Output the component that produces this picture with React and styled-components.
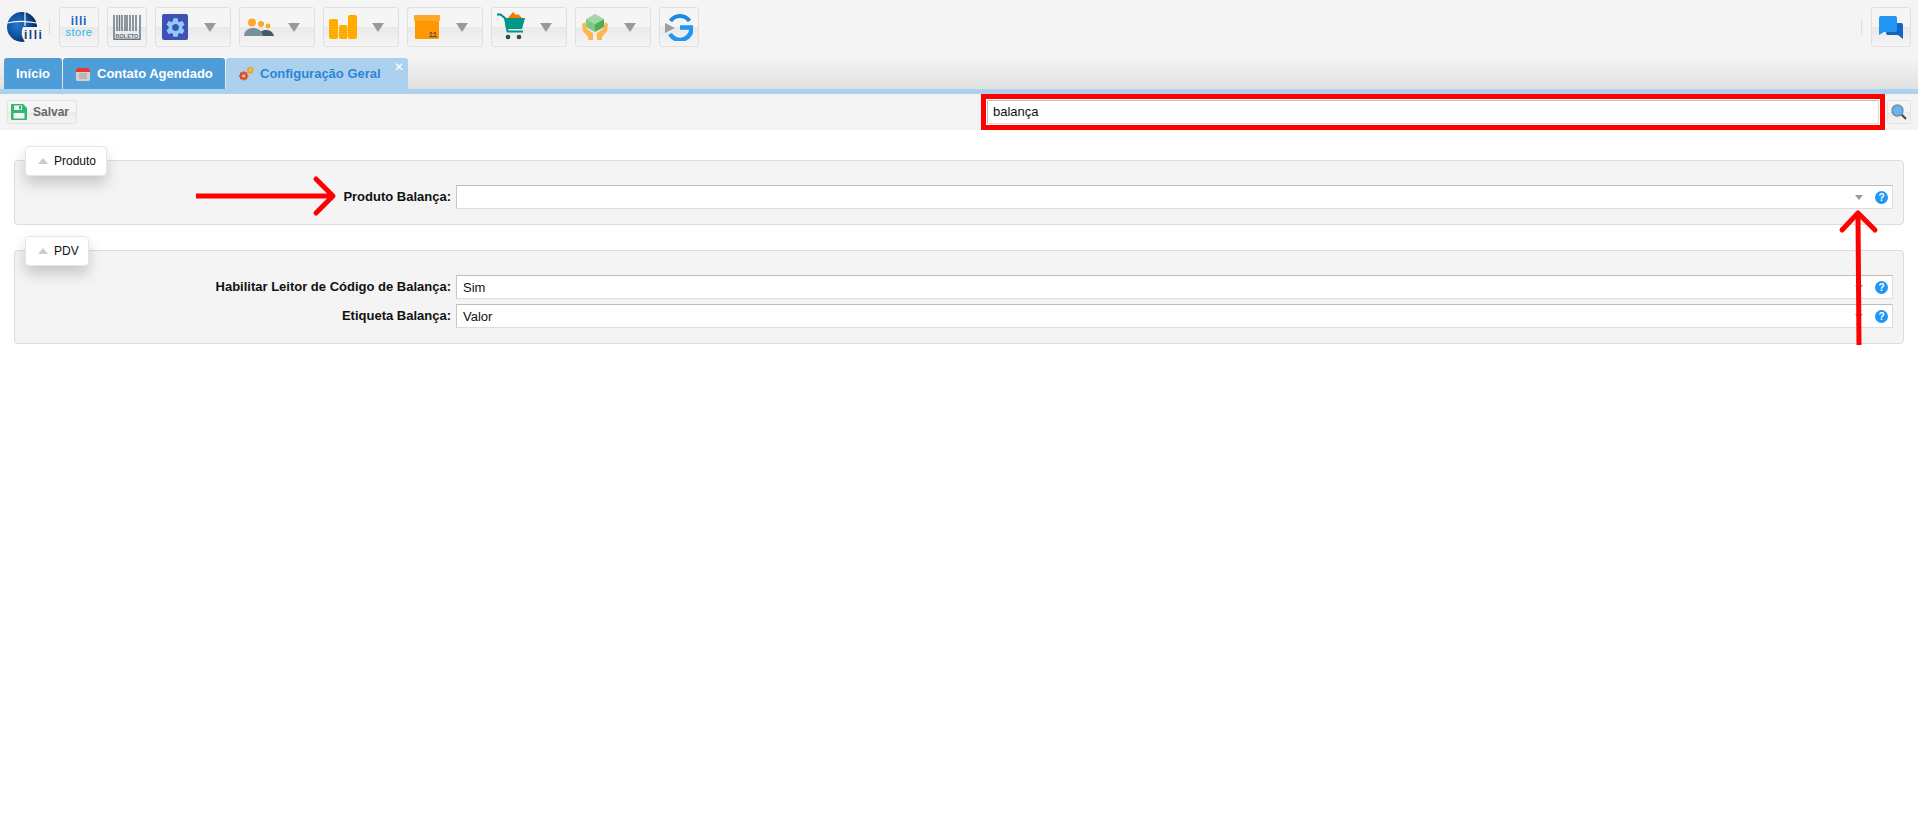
import React from 'react';
import styled, { createGlobalStyle, css } from 'styled-components';
import { MdSettings } from 'react-icons/md';

const GlobalStyle = createGlobalStyle`
  html, body {
    margin: 0;
    padding: 0;
    background: #fff;
    font-family: "Liberation Sans", Arial, sans-serif;
  }
  * { box-sizing: border-box; }
`;

const Page = styled.div`
  position: relative;
  width: 1918px;
  height: 825px;
  overflow: hidden;
  background: #fff;
`;

const Header = styled.div`
  height: 58px;
  background: #f4f4f4;
  display: flex;
  align-items: flex-start;
  padding: 7px 7px 0 7px;
`;

const Logo = styled.svg`
  width: 34px;
  height: 32px;
  margin-top: 5px;
  flex: none;
  overflow: visible;
`;

const Divider = styled.div`
  width: 1px;
  height: 14px;
  background: #dedede;
  margin-top: 13px;
  margin-left: ${p => (p.$auto ? 'auto' : `${p.$left}px`)};
  margin-right: ${p => p.$right}px;
  flex: none;
`;

const MenuButton = styled.div`
  width: ${p => (p.$wide ? 76 : 40)}px;
  height: 40px;
  margin-right: ${p => (p.$end ? 0 : 8)}px;
  flex: none;
  border: 1px solid #e0e0e0;
  border-radius: 3px;
  background: linear-gradient(#f5f5f5 0, #f5f5f5 49%, #e9e9e9 50%, #f5f5f5 100%);
  display: flex;
  align-items: center;
  justify-content: ${p => (p.$wide ? 'space-between' : 'center')};
  padding: ${p => (p.$wide ? `0 14px 0 ${p.$pad}px` : '0')};
`;

const Caret = styled.span`
  width: 0;
  height: 0;
  flex: none;
  border-left: 6.5px solid transparent;
  border-right: 6.5px solid transparent;
  border-top: 9px solid #999;
`;

const TabStrip = styled.div`
  height: 31px;
  background: linear-gradient(#f4f4f4, #e0e0e0);
  display: flex;
  align-items: flex-end;
  padding-left: 4px;
  gap: 1px;
`;

const Tab = styled.div`
  position: relative;
  height: 31px;
  display: flex;
  align-items: center;
  width: ${p => p.$width}px;
  padding-left: ${p => p.$pad}px;
  gap: ${p => p.$gap || 0}px;
  border-radius: 3px 3px 0 0;
  background: ${p => (p.$active ? '#acd1ee' : '#4e9cd8')};
  color: ${p => (p.$active ? '#2a86d6' : '#fff')};
  font-size: 13px;
  font-weight: 700;
`;

const TabClose = styled.span`
  position: absolute;
  top: 3px;
  right: 4px;
  color: #fff;
  font-size: 12px;
  line-height: 13px;
  font-weight: 400;
`;

const BlueLine = styled.div`
  height: 5px;
  background: #acd1ee;
`;

const Toolbar = styled.div`
  height: 36px;
  background: #f4f4f4;
  display: flex;
  align-items: center;
  padding: 0 7px;
`;

const smallButton = css`
  height: 24px;
  border: 1px solid #e2e2e2;
  border-radius: 3px;
  background: linear-gradient(#f5f5f5, #f5f5f5 50%, #ebebeb 51%, #f4f4f4);
  display: flex;
  align-items: center;
`;

const SaveButton = styled.div`
  ${smallButton}
  width: 70px;
  padding-left: 3px;
  gap: 6px;
  color: #666;
  font-size: 12px;
  font-weight: 700;
`;

const SearchBox = styled.div`
  margin-left: auto;
  width: 904px;
  height: 36px;
  border: 5px solid #f00;
  background: #fff;
  padding: 1px;
  display: flex;
`;

const SearchInput = styled.div`
  flex: 1;
  border: 1px solid #bdbdbd;
  border-bottom-color: #ddd;
  border-right-color: #ddd;
  padding-left: 5px;
  font-size: 13px;
  line-height: 22px;
  color: #111;
`;

const SearchButton = styled.div`
  ${smallButton}
  width: 24px;
  margin-left: 2px;
  justify-content: center;
`;

const Content = styled.div`
  padding: 30px 14px 0 14px;
`;

const Fieldset = styled.div`
  position: relative;
  height: ${p => p.$height}px;
  margin-bottom: 25px;
  border: 1px solid #dcdcdc;
  border-radius: 4px;
  background: #f4f4f4;
  padding-top: 24px;
  padding-right: 10px;
`;

const Legend = styled.div`
  position: absolute;
  left: 10px;
  top: -15px;
  width: ${p => p.$width}px;
  height: 30px;
  display: flex;
  align-items: center;
  gap: 6px;
  padding-left: 12px;
  background: #fff;
  border: 1px solid #e6e6e6;
  border-radius: 4px;
  box-shadow: 0 8px 14px rgba(0, 0, 0, 0.18);
  font-size: 12px;
  color: #111;
`;

const LegendCaret = styled.span`
  width: 0;
  height: 0;
  border-left: 5px solid transparent;
  border-right: 5px solid transparent;
  border-bottom: 6px solid #ccc;
`;

const Row = styled.div`
  display: flex;
  align-items: center;
  height: 24px;
  margin-bottom: 5px;
`;

const Label = styled.div`
  width: 441px;
  padding: 0 5px 2px 0;
  text-align: right;
  font-size: 13px;
  font-weight: 700;
  color: #111;
  flex: none;
`;

const Select = styled.div`
  position: relative;
  flex: 1;
  height: 24px;
  background: #fff;
  border: 1px solid #ddd;
  border-top-color: #bdbdbd;
  border-left-color: #c8c8c8;
  padding-left: 6px;
  font-size: 13px;
  line-height: 24px;
  color: #111;
`;

const SelectCaret = styled.span`
  position: absolute;
  right: 29px;
  top: 9px;
  width: 0;
  height: 0;
  border-left: 4px solid transparent;
  border-right: 4px solid transparent;
  border-top: 5px solid #999;
`;

const Help = styled.span`
  position: absolute;
  right: 4px;
  top: 5px;
  width: 13px;
  height: 13px;
  border-radius: 50%;
  background: #2196f3;
  color: #fff;
  font-size: 10px;
  line-height: 13px;
  font-weight: 700;
  text-align: center;
`;

const GearTile = styled.span`
  width: 26px;
  height: 26px;
  flex: none;
  border-radius: 2px;
  background: #3f51b5;
  color: #90caf9;
  display: flex;
  align-items: center;
  justify-content: center;
  font-size: 23px;
`;

const Annotation = styled.svg`
  position: absolute;
  left: 0;
  top: 0;
  pointer-events: none;
`;

const LogoIcon = () => (
  <Logo viewBox="0 0 34 32">
    <defs>
      <radialGradient id="globe" cx="35%" cy="45%" r="65%">
        <stop offset="0" stopColor="#2477cc" />
        <stop offset="0.6" stopColor="#0f4f9e" />
        <stop offset="1" stopColor="#08234a" />
      </radialGradient>
    </defs>
    <circle cx="15" cy="15" r="15" fill="url(#globe)" />
    <path d="M0 11c8-2 20-2 30 0M18 0v14" stroke="#f4f4f4" strokeWidth="1.200" fill="none" />
    <path d="M18 30a15 15 0 0 1-2-15h18v17H18z" fill="#f4f4f4" />
    <text x="17" y="27" fontSize="12" fontWeight="700" fontFamily="Liberation Sans" fill="#123f7e" letterSpacing="1.500">illi</text>
  </Logo>
);

const StoreIcon = () => (
  <svg width="28" height="26" viewBox="0 0 28 26">
    <text x="14" y="11" textAnchor="middle" fontSize="12" fontWeight="700" fontFamily="Liberation Sans" fill="#1565c0" letterSpacing="0.800">illi</text>
    <text x="14" y="22" textAnchor="middle" fontSize="11" fontFamily="Liberation Sans" fill="#2ab8e6" letterSpacing="0.500">store</text>
  </svg>
);

const BoletoIcon = () => (
  <svg width="28" height="25" viewBox="0 0 28 25">
    <path d="M1 0v25M4 0v16M6.500 0v16M9 0v16M12 0v16M14 0v16M17 0v16M20 0v16M23 0v16M27 0v25" stroke="#6a7a85" strokeWidth="1.500" />
    <rect x="1" y="23.500" width="26" height="1.500" fill="#6a7a85" />
    <text x="14" y="22.500" textAnchor="middle" fontSize="5.500" fontWeight="700" fontFamily="Liberation Sans" fill="#5c6a74">BOLETO</text>
  </svg>
);

const GearIcon = () => (
  <GearTile><MdSettings /></GearTile>
);

const PeopleIcon = () => (
  <svg width="30" height="18" viewBox="0 0 30 18">
    <circle cx="8" cy="4.500" r="4" fill="#ffa726" />
    <circle cx="17" cy="6" r="3" fill="#ffa726" />
    <circle cx="24" cy="8" r="2.400" fill="#ffa726" />
    <path d="M14 18c1-4 4-6 8-6s7 2 8 6z" fill="#455a64" />
    <path d="M0 18c0-5 4-8 9-8s9 3 10 8z" fill="#78909c" />
  </svg>
);

const CoinsIcon = () => (
  <svg width="28" height="24" viewBox="0 0 28 24">
    <defs>
      <pattern id="coin" width="28" height="2.500" patternUnits="userSpaceOnUse">
        <rect width="28" height="2.500" fill="#ffb300" />
        <rect width="28" height="0.800" fill="#ffa000" />
      </pattern>
    </defs>
    <rect x="0" y="4" width="9" height="20" rx="2" fill="url(#coin)" />
    <rect x="10" y="10" width="8.500" height="14" rx="2" fill="url(#coin)" />
    <rect x="19" y="0" width="9" height="24" rx="2" fill="url(#coin)" />
  </svg>
);

const BoxIcon = () => (
  <svg width="26" height="24" viewBox="0 0 26 24">
    <rect x="1" y="4" width="24" height="20" rx="1" fill="#ff9800" />
    <rect x="0" y="0" width="26" height="6" rx="1" fill="#ffa726" />
    <path d="M17 21v-4M21 21v-4M15.500 18.500l1.500-1.500 1.500 1.500M19.500 18.500l1.500-1.500 1.500 1.500" stroke="#6d4c41" strokeWidth="1" fill="none" />
    <rect x="15" y="21" width="8" height="1.200" fill="#6d4c41" />
  </svg>
);

const CartIcon = () => (
  <svg width="28" height="30" viewBox="0 0 28 30">
    <path d="M11 6l5-6 3 3 2-1 4 4z" fill="#f57c00" />
    <path d="M0 2.500h3.500l5 4 2 13" stroke="#00897b" strokeWidth="2" fill="none" />
    <path d="M7 6h21l-3 11H9z" fill="#009688" />
    <path d="M10 19.500h16" stroke="#009688" strokeWidth="2" />
    <circle cx="11" cy="25" r="2.300" fill="#37474f" />
    <circle cx="22" cy="25" r="2.300" fill="#37474f" />
  </svg>
);

const HandsIcon = () => (
  <svg width="26" height="26" viewBox="0 0 26 26">
    <path d="M13 0l9 5-9 5-9-5z" fill="#a5d6a7" />
    <path d="M4 5l9 5v8l-9-5z" fill="#81c784" />
    <path d="M22 5l-9 5v8l9-5z" fill="#4caf50" />
    <path d="M0 10l3-2 2 7 6 4v7H6v-3L1 17z" fill="#ffb74d" />
    <path d="M26 10l-3-2-2 7-6 4v7h5v-3l5-6z" fill="#ffb74d" />
  </svg>
);

const GoIcon = () => (
  <svg width="28" height="27" viewBox="0 0 28 27">
    <path d="M24.500 7A11.500 11.500 0 0 0 5.500 7" stroke="#1e88e5" strokeWidth="4" fill="none" />
    <path d="M5 20A11.500 11.500 0 0 0 26.500 13.500H15" stroke="#2196f3" strokeWidth="4.500" fill="none" />
    <path d="M0 9l10 5-10 5z" fill="#9e9e9e" />
  </svg>
);

const ChatIcon = () => (
  <svg width="24" height="23" viewBox="0 0 24 23">
    <path d="M9 7h13a2 2 0 0 1 2 2v14l-5-4H9a2 2 0 0 1-2-2z" fill="#1565c0" />
    <path d="M2 0h14a2 2 0 0 1 2 2v12a2 2 0 0 1-2 2H5l-5 3V2a2 2 0 0 1 2-2z" fill="#2196f3" />
  </svg>
);

const CalendarIcon = () => (
  <svg width="14" height="14" viewBox="0 0 14 14">
    <rect x="0" y="1" width="14" height="13" rx="1.500" fill="#d5d0ca" />
    <path d="M0 2.500a1.500 1.500 0 0 1 1.500-1.500h11a1.500 1.500 0 0 1 1.500 1.500V5H0z" fill="#e53935" />
    <path d="M3 7h8M3 9h8M3 11h8" stroke="#9e9e9e" />
  </svg>
);

const GearsIcon = () => (
  <svg width="15" height="15" viewBox="0 0 16 15">
    <circle cx="5" cy="10" r="3" fill="none" stroke="#e64a19" strokeWidth="2.400" />
    <path d="M5 5v1.500M5 13.500V15M0 10h1.500M8.500 10H10M1.500 6.500l1 1M7.500 12.500l1 1M8.500 6.500l-1 1M2.500 12.500l-1 1" stroke="#e64a19" strokeWidth="1.600" />
    <circle cx="12" cy="4" r="2.400" fill="none" stroke="#ffa000" strokeWidth="1.800" />
    <path d="M12 0v1M12 7v1M8 4h1M15 4h1M9.200 1.200l.8.8M14 6l.8.8M14.800 1.200L14 2M10 6l-.8.8" stroke="#ffa000" strokeWidth="1.300" />
  </svg>
);

const SaveIcon = () => (
  <svg width="16" height="16" viewBox="0 0 16 16">
    <path d="M0 1a1 1 0 0 1 1-1h11l4 4v11a1 1 0 0 1-1 1H1a1 1 0 0 1-1-1z" fill="#2eb872" />
    <rect x="3" y="1.500" width="8" height="4.500" fill="#f5f5f5" />
    <rect x="8" y="2" width="2" height="3.500" fill="#2eb872" />
    <rect x="2.500" y="9" width="11" height="5.500" fill="#f5f5f5" />
  </svg>
);

const SearchIcon = () => (
  <svg width="16" height="16" viewBox="0 0 16 16">
    <path d="M10 10l5 5" stroke="#37474f" strokeWidth="2" />
    <circle cx="6.500" cy="6.500" r="5.500" fill="#64b5f6" stroke="#78909c" strokeWidth="1.500" />
  </svg>
);

const wideButtons = [
  { key: 'gear', icon: <GearIcon />, pad: 6 },
  { key: 'people', icon: <PeopleIcon />, pad: 4 },
  { key: 'coins', icon: <CoinsIcon />, pad: 5 },
  { key: 'box', icon: <BoxIcon />, pad: 6 },
  { key: 'cart', icon: <CartIcon />, pad: 5 },
  { key: 'hands', icon: <HandsIcon />, pad: 6 },
];

const Field = ({ label, value }) => (
  <Row>
    <Label>{label}</Label>
    <Select>
      {value}
      <SelectCaret />
      <Help>?</Help>
    </Select>
  </Row>
);

export default function App() {
  return (
    <Page>
      <GlobalStyle />
      <Header>
        <LogoIcon />
        <Divider $left={8} $right={9} />
        <MenuButton><StoreIcon /></MenuButton>
        <MenuButton><BoletoIcon /></MenuButton>
        {wideButtons.map(b => (
          <MenuButton $wide $pad={b.pad} key={b.key}>
            {b.icon}
            <Caret />
          </MenuButton>
        ))}
        <MenuButton><GoIcon /></MenuButton>
        <Divider $auto $right={9} />
        <MenuButton $end><ChatIcon /></MenuButton>
      </Header>
      <TabStrip>
        <Tab $width={58} $pad={12}>Início</Tab>
        <Tab $width={162} $pad={13} $gap={7}><CalendarIcon />Contato Agendado</Tab>
        <Tab $active $width={182} $pad={13} $gap={6}>
          <GearsIcon />Configuração Geral
          <TabClose>✕</TabClose>
        </Tab>
      </TabStrip>
      <BlueLine />
      <Toolbar>
        <SaveButton><SaveIcon />Salvar</SaveButton>
        <SearchBox><SearchInput>balança</SearchInput></SearchBox>
        <SearchButton><SearchIcon /></SearchButton>
      </Toolbar>
      <Content>
        <Fieldset $height={65}>
          <Legend $width={82}><LegendCaret />Produto</Legend>
          <Field label="Produto Balança:" value="" />
        </Fieldset>
        <Fieldset $height={94}>
          <Legend $width={64}><LegendCaret />PDV</Legend>
          <Field label="Habilitar Leitor de Código de Balança:" value="Sim" />
          <Field label="Etiqueta Balança:" value="Valor" />
        </Fieldset>
      </Content>
      <Annotation width="1918" height="825" viewBox="0 0 1918 825">
        <path d="M196 196H331" stroke="#f00" strokeWidth="5" fill="none" />
        <path d="M316 179l17 17-17 17" stroke="#f00" strokeWidth="5" fill="none" strokeLinecap="round" strokeLinejoin="round" />
        <path d="M1859 345L1858 214" stroke="#f00" strokeWidth="5" fill="none" />
        <path d="M1842 230l16-17 17 17" stroke="#f00" strokeWidth="5" fill="none" strokeLinecap="round" strokeLinejoin="round" />
      </Annotation>
    </Page>
  );
}
